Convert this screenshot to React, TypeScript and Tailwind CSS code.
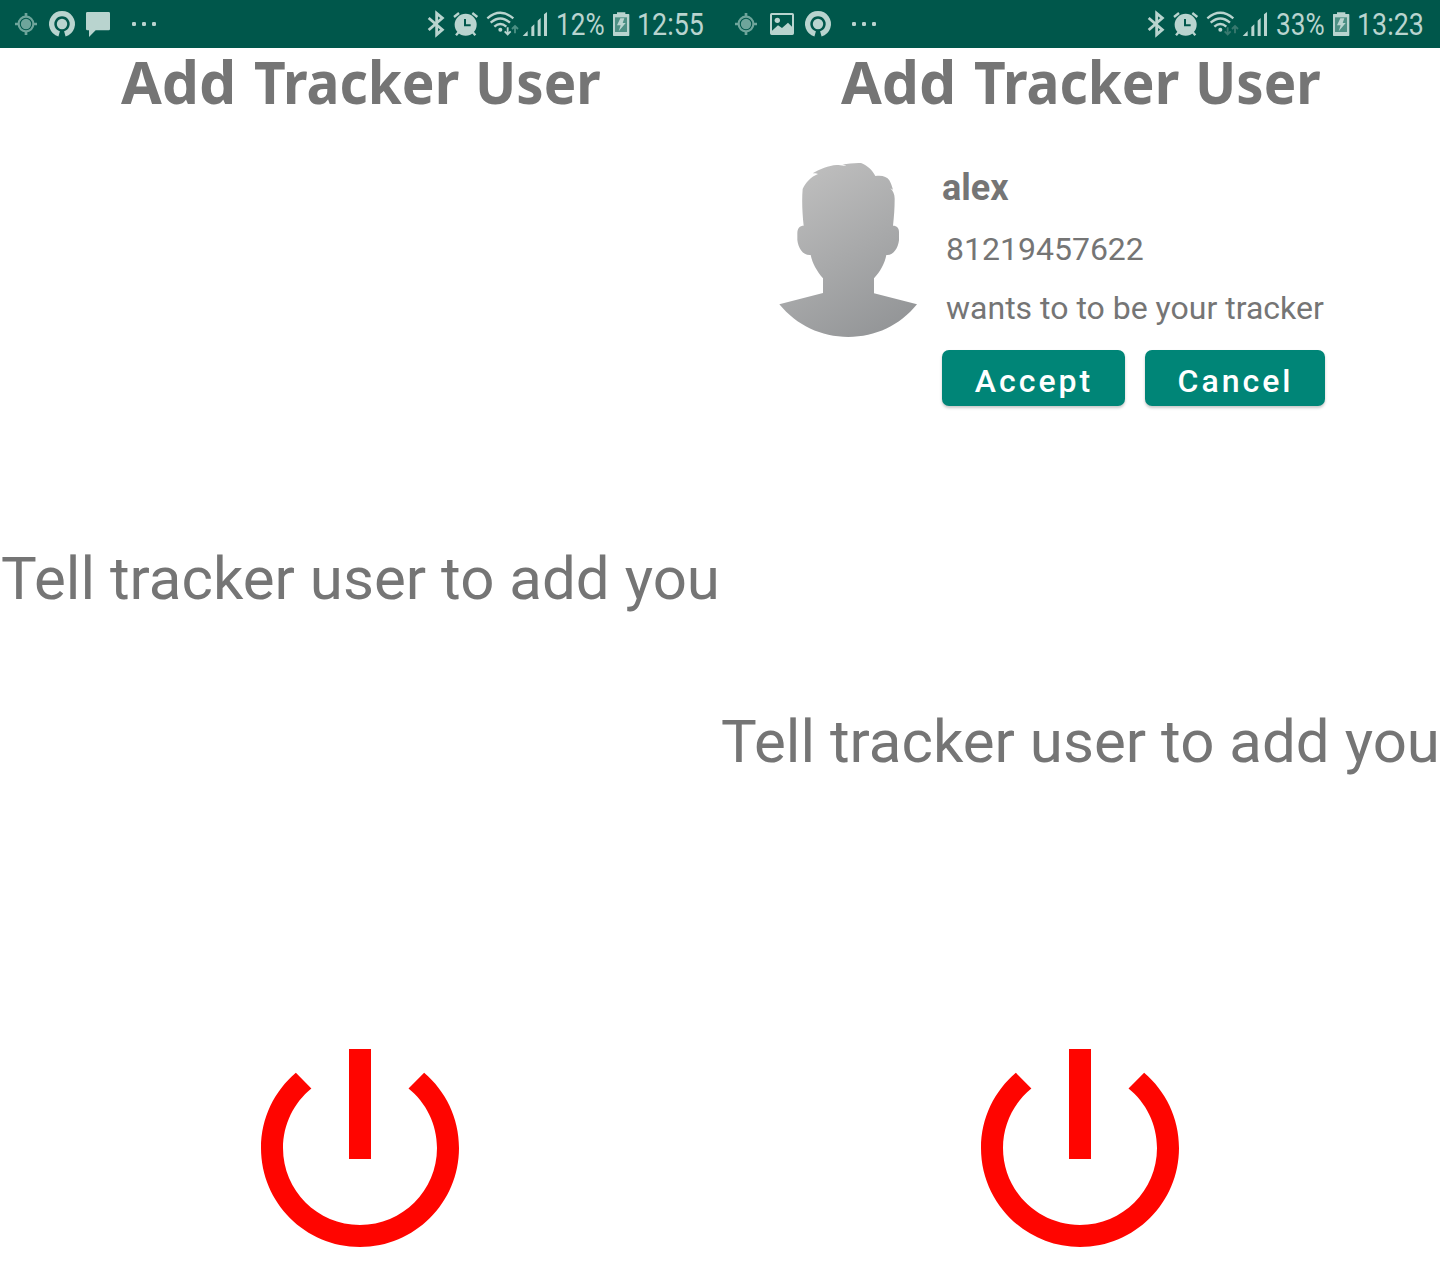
import React from "react";

const INK = "#b9d4cf";
const DIM = "#6ea59b";

function LocationIcon() {
  return (
    <svg className="h-12 w-9 shrink-0" viewBox="0 0 108 144" fill="none">
      <circle cx="54" cy="72" r="22" stroke={DIM} strokeWidth="6.5" />
      <circle cx="54" cy="72" r="15.5" fill={DIM} />
      <path d="M54 39v10M54 95v10M21 72h10M77 72h10" stroke={DIM} strokeWidth="8" />
    </svg>
  );
}

function RecordIcon() {
  return (
    <svg className="h-12 w-9 shrink-0" viewBox="0 0 108 144" fill="none">
      <path d="M45.5 101.8A31 31 0 1 1 62.5 101.8" stroke={INK} strokeWidth="16" />
      <circle cx="54" cy="72" r="15.5" fill={INK} />
    </svg>
  );
}

function ChatIcon() {
  return (
    <svg className="h-12 w-9 shrink-0" viewBox="0 0 108 144">
      <path d="M22 36h64q4 0 4 4v47q0 4-4 4H47L27 111V91h-5q-4 0-4-4V40q0-4 4-4z" fill={INK} />
    </svg>
  );
}

function ImageIcon() {
  return (
    <svg className="h-12 w-9 shrink-0" viewBox="0 0 108 144">
      <path
        fillRule="evenodd"
        d="M23 39h62q5 0 5 5v56q0 5-5 5H23q-5 0-5-5V44q0-5 5-5zM24 45V92l18-16 12 8 18-16 12 12V45z"
        fill={INK}
      />
      <circle cx="40" cy="61" r="8" fill={INK} />
    </svg>
  );
}

function DotsIcon() {
  return (
    <svg className="h-12 w-12 shrink-0" viewBox="0 0 144 144" fill={INK}>
      <rect x="48" y="66" width="12" height="12" rx="4" />
      <rect x="78" y="66" width="12" height="12" rx="4" />
      <rect x="108" y="66" width="12" height="12" rx="4" />
    </svg>
  );
}

function BluetoothIcon() {
  return (
    <svg className="h-12 w-6 shrink-0" viewBox="27 0 72 144" fill="none">
      <path d="M41 54L82 89L65 104V40L82 54L41 90" stroke={INK} strokeWidth="8.5" />
    </svg>
  );
}

function AlarmIcon() {
  return (
    <svg className="h-12 w-9 shrink-0" viewBox="99 0 108 144" fill="none">
      <circle cx="152" cy="74" r="33" fill={INK} />
      <path d="M132 95l-9 11M172 95l9 11" stroke={INK} strokeWidth="7" />
      <path d="M117 51l15-12M172 39l15 12" stroke={INK} strokeWidth="7" />
      <path d="M150 57v19h17" stroke="#00574b" strokeWidth="6" />
    </svg>
  );
}

function WifiIcon({ down, up }: { down: string; up: string }) {
  return (
    <svg className="h-12 w-9 shrink-0" viewBox="207 0 108 144" fill="none">
      <path d="M217 55Q256 22 295 55" stroke={INK} strokeWidth="7" />
      <path d="M227 68Q256 43 285 68" stroke={INK} strokeWidth="7" />
      <path d="M238 80Q256 64 274 80" stroke={INK} strokeWidth="7" />
      <circle cx="256" cy="89" r="6" fill={INK} />
      <path d="M278 82v22M269 94l9 9 9-9" stroke={down} strokeWidth="5.5" />
      <path d="M300 100V78M291 87l9-9 9 9" stroke={up} strokeWidth="5.5" />
    </svg>
  );
}

function SignalIcon() {
  return (
    <svg className="h-12 w-[30px] shrink-0" viewBox="315 0 90 144" fill={INK}>
      <path d="M323 108l15-15v15zM349 108V81l9-8v35zM368 108V62l9-8v54zM387 108V43l9-7v72z" />
    </svg>
  );
}

function BatteryIcon() {
  return (
    <svg className="h-12 w-[22px] shrink-0" viewBox="0 0 66 144">
      <path d="M10 42h11v-5h25v5h10q2 0 2 2v62q0 2-2 2H11q-2 0-2-2V44q0-2 1-2z" fill={INK} />
      <path d="M15 52h36v44H15z" fill="#4c9084" />
      <path d="M31 55h12l-5 14h9L26 94l6-18H21z" fill={INK} />
    </svg>
  );
}

function StatusBar({ battery, time, second }: { battery: string; time: string; second?: boolean }) {
  return (
    <header className="flex h-12 shrink-0 bg-[#00574b] pl-2 pr-[10px] text-[#b9d4cf]">
      <LocationIcon />
      {second ? <ImageIcon /> : <RecordIcon />}
      {second ? <RecordIcon /> : <ChatIcon />}
      <DotsIcon />
      <div className="ml-auto flex w-[286px] text-[31px] leading-[50px]">
        <BluetoothIcon />
        <AlarmIcon />
        <WifiIcon down={second ? "#39796f" : INK} up={second ? "#39796f" : "#4c9084"} />
        <SignalIcon />
        <div className="w-[60px] shrink-0 whitespace-nowrap pl-[6px]">
          <span className="inline-block origin-left scale-x-[0.845]">{battery}</span>
        </div>
        <BatteryIcon />
        <div className="w-[78px] shrink-0 whitespace-nowrap pl-[5px]">
          <span className="inline-block origin-left scale-x-[0.865]">{time}</span>
        </div>
      </div>
    </header>
  );
}

function PowerIcon() {
  return (
    <svg className="mx-auto size-[264px] shrink-0" viewBox="0 0 24 24" fill="#ff0500">
      <path d="M13 3h-2v10h2V3zm4.83 2.17l-1.42 1.42C17.99 7.86 19 9.81 19 12c0 3.87-3.13 7-7 7s-7-3.13-7-7c0-2.19 1.01-4.14 2.58-5.42L6.17 5.17C4.23 6.82 3 9.26 3 12c0 4.97 4.03 9 9 9s9-4.03 9-9c0-2.74-1.23-5.18-3.17-6.83z" />
    </svg>
  );
}

function Avatar() {
  return (
    <svg className="h-[200px] w-[180px] shrink-0" viewBox="0 0 540 600">
      <defs>
        <linearGradient id="shade" gradientUnits="userSpaceOnUse" x1="120" y1="90" x2="400" y2="540">
          <stop offset="0" stopColor="#bdbdbd" />
          <stop offset="1" stopColor="#939597" />
        </linearGradient>
      </defs>
      <path
        fill="url(#shade)"
        d="M131 227C127 190 125 150 128 117C136 99 153 80 174 72C168 70 163 70 158 70C180 57 205 47 230 45C240 45 250 49 259 46L247 43C265 41 285 38 303 39C322 46 338 61 346 78C365 75 381 79 388 91C393 99 396 110 399 119L391 115C399 122 404 133 404 146C404 175 402 200 399 227C411 227 417 234 417 247V271C414 294 401 317 379 315C374 341 360 366 342 385V430L471 463C420 526 347 561 265 561C183 561 110 526 58 463L189 429V385C171 364 157 340 152 315C129 317 115 295 112 270V248C113 234 119 227 131 227Z"
      />
    </svg>
  );
}

const BUTTON =
  "h-14 rounded-[7px] bg-[#008577] pl-px text-center text-[32px] font-medium leading-[62px] tracking-[3px] text-white shadow-[0_2px_3px_rgba(0,0,0,0.22)]";

function Title() {
  return (
    <h1 className="flex h-[72px] shrink-0 whitespace-nowrap pl-[121px] font-['Noto_Sans',sans-serif] text-[59px] font-bold leading-[67px]">
      <span className="w-[130px]">Add</span>{" "}
      <span className="w-[224px]">
        <span className="inline-block origin-left translate-x-[3px] scale-x-[0.932]">Tracker</span>
      </span>{" "}
      <span className="inline-block origin-left scale-x-[0.925]">User</span>
    </h1>
  );
}

function Hint() {
  return (
    <p className="h-[70px] shrink-0 whitespace-nowrap pl-[1px] text-center text-[60px] leading-[70px] tracking-[0.03px]">
      Tell tracker user to add you
    </p>
  );
}

function Request() {
  return (
    <section className="ml-10 mt-[30px] flex h-[270px] shrink-0">
      <Avatar />
      <div className="ml-[2px] pt-[17px]">
        <h2 className="h-[42px] text-[36px] font-bold leading-[42px]">alex</h2>
        <p className="ml-1 mt-[21px] h-[38px] text-[32px] leading-[38px]">81219457622</p>
        <p className="ml-1 mt-[21px] h-[38px] whitespace-nowrap text-[32px] leading-[38px]">wants to to be your tracker</p>
        <div className="mt-[23px] flex gap-5">
          <button className={`${BUTTON} w-[183px]`}>Accept</button>
          <button className={`${BUTTON} w-[180px]`}>Cancel</button>
        </div>
      </div>
    </section>
  );
}

export default function App() {
  return (
    <main className="flex h-[1280px] w-[1440px] overflow-hidden bg-white font-[Roboto,sans-serif] text-[#757575]">
      <div className="flex w-[720px] shrink-0 flex-col">
        <StatusBar battery="12%" time="12:55" />
        <Title />
        <div className="h-[424px] shrink-0" />
        <Hint />
        <div className="flex-1" />
        <PowerIcon />
      </div>
      <div className="flex w-[720px] shrink-0 flex-col">
        <StatusBar battery="33%" time="13:23" second />
        <Title />
        <Request />
        <div className="h-[287px] shrink-0" />
        <Hint />
        <div className="flex-1" />
        <PowerIcon />
      </div>
    </main>
  );
}
